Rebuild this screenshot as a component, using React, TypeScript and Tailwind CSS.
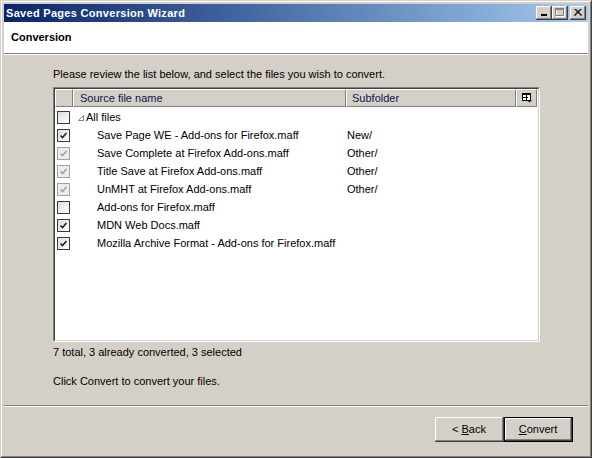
import React from "react";

const font = { fontFamily: '"Liberation Sans", Arial, sans-serif' };

function Check({ color }: { color: string }) {
  return (
    <svg width="11" height="11" viewBox="0 0 11 11" className="block">
      <path d="M2.5 5.5 L4.5 7.5 L8.5 3" fill="none" stroke={color} strokeWidth="1.6" />
    </svg>
  );
}

function CheckBox({ checked, disabled }: { checked?: boolean; disabled?: boolean }) {
  return (
    <div
      className={
        "w-[13px] h-[13px] border flex items-center justify-center " +
        (disabled
          ? "border-[#a3a3a3] bg-[#ececec]"
          : "border-[#3c3c3c] bg-gradient-to-br from-[#dcdcdc] to-[#ffffff]")
      }
    >
      {checked ? <Check color={disabled ? "#a0a0a0" : "#202020"} /> : null}
    </div>
  );
}

function TitleBtn({ children }: { children: React.ReactNode }) {
  return (
    <div className="w-[16px] h-[14px] border-r border-b border-[#404040]">
      <div className="w-full h-full border-t border-l border-white border-r border-b border-r-[#808080] border-b-[#808080] bg-[#d4d0c8] flex items-center justify-center">
        {children}
      </div>
    </div>
  );
}

function HeaderCell({ className, children }: { className: string; children?: React.ReactNode }) {
  return (
    <div
      className={
        "h-full border-t border-l border-white border-r border-b border-r-[#808080] border-b-[#808080] bg-[#d4d0c8] flex items-center text-[#12124a] " +
        className
      }
    >
      {children}
    </div>
  );
}

type Row = { name: string; sub?: string; checked?: boolean; disabled?: boolean };

const rows: Row[] = [
  { name: "Save Page WE - Add-ons for Firefox.maff", sub: "New/", checked: true },
  { name: "Save Complete at Firefox Add-ons.maff", sub: "Other/", checked: true, disabled: true },
  { name: "Title Save at Firefox Add-ons.maff", sub: "Other/", checked: true, disabled: true },
  { name: "UnMHT at Firefox Add-ons.maff", sub: "Other/", checked: true, disabled: true },
  { name: "Add-ons for Firefox.maff" },
  { name: "MDN Web Docs.maff", checked: true },
  { name: "Mozilla Archive Format - Add-ons for Firefox.maff", checked: true },
];

function Button({ children, isDefault }: { children: React.ReactNode; isDefault?: boolean }) {
  const inner = (
    <div className="w-full h-full border-r border-b border-[#404040]">
      <div className="w-full h-full border-t border-l border-white border-r border-b border-r-[#808080] border-b-[#808080] bg-[#d4d0c8] flex items-center justify-center text-black">
        {children}
      </div>
    </div>
  );
  return (
    <div className={"w-[69px] h-[25px] " + (isDefault ? "border border-black" : "")}>{inner}</div>
  );
}

export default function App() {
  return (
    <div className="w-[592px] h-[458px] text-[11px] leading-[13px] text-black" style={font}>
      <div className="w-full h-full border-t border-l border-[#d4d0c8] border-r border-b border-r-[#404040] border-b-[#404040]">
        <div className="w-full h-full border-t border-l border-white border-r border-b border-r-[#808080] border-b-[#808080] bg-[#d4d0c8] p-[2px] flex flex-col">
          {/* Title bar */}
          <div className="h-[18px] shrink-0 bg-gradient-to-r from-[#0a246a] to-[#a6caf0] flex items-center pl-[2px] pr-[2px]">
            <span className="text-white font-bold tracking-[0.3px]">Saved Pages Conversion Wizard</span>
            <div className="ml-auto flex items-center">
              <TitleBtn>
                <svg width="8" height="8" viewBox="0 0 8 8" className="block">
                  <rect x="1" y="5" width="6" height="2" fill="#000" />
                </svg>
              </TitleBtn>
              <TitleBtn>
                <svg width="10" height="9" viewBox="0 0 10 9" className="block">
                  <path d="M1.5 1.5 h8 v7 h-8 z" fill="none" stroke="#ffffff" strokeWidth="1" />
                  <path d="M0.5 0.5 h8 v7 h-8 z" fill="none" stroke="#808080" strokeWidth="1" />
                  <rect x="0" y="0" width="9" height="2" fill="#808080" />
                </svg>
              </TitleBtn>
              <div className="w-[2px]" />
              <TitleBtn>
                <svg width="8" height="7" viewBox="0 0 8 7" className="block">
                  <path d="M0.5 0 L7.5 7 M1.5 0 L8 6.5 M7.5 0 L0.5 7 M6.5 0 L0 6.5" stroke="#000" strokeWidth="1" />
                </svg>
              </TitleBtn>
            </div>
          </div>

          {/* Header */}
          <div className="h-[31px] shrink-0 bg-white flex items-center pl-[7px]">
            <span className="font-bold">Conversion</span>
          </div>
          <div className="shrink-0 border-t border-[#808080] border-b border-b-white" />

          {/* Body */}
          <div className="h-[350px] shrink-0 flex flex-col pl-[49px] pr-[48px]">
            <div className="mt-[13px]">Please review the list below, and select the files you wish to convert.</div>
            <div className="mt-[6px] h-[255px] border-t border-l border-[#808080] border-r border-b border-r-white border-b-white">
              <div className="w-full h-full border-t border-l border-[#404040] border-r border-b border-r-[#d4d0c8] border-b-[#d4d0c8] bg-white flex flex-col">
                <div className="h-[18px] flex shrink-0">
                  <HeaderCell className="w-[18px]" />
                  <HeaderCell className="w-[273px] pl-[6px]">Source file name</HeaderCell>
                  <HeaderCell className="w-[170px] pl-[5px]">Subfolder</HeaderCell>
                  <HeaderCell className="w-[21px] justify-center">
                    <svg width="10" height="10" viewBox="0 0 10 10" className="block">
                      <rect x="0.5" y="0.5" width="8" height="7" fill="#fff" stroke="#000" />
                      <rect x="0" y="0" width="9" height="2" fill="#000" />
                      <path d="M0.5 4.5 H6 M4.5 2 V7.5" stroke="#000" strokeWidth="1" />
                      <path d="M5 7 H10 L7.5 9.5 Z" fill="#000" />
                    </svg>
                  </HeaderCell>
                </div>
                <div className="flex flex-col pt-[1px]">
                  <div className="h-[18px] flex items-center">
                    <div className="w-[18px] pl-[2px]">
                      <CheckBox />
                    </div>
                    <div className="pl-[5px] flex items-center">
                      <svg width="6" height="6" viewBox="0 0 6 6" className="block mt-[2px]">
                        <path d="M5.5 0.5 V5.5 H0.5 Z" fill="none" stroke="#808080" strokeWidth="1" />
                      </svg>
                      <span className="ml-[2px]">All files</span>
                    </div>
                  </div>
                  {rows.map((r) => (
                    <div key={r.name} className="h-[18px] flex items-center">
                      <div className="w-[18px] pl-[2px]">
                        <CheckBox checked={r.checked} disabled={r.disabled} />
                      </div>
                      <div className="w-[273px] pl-[24px] whitespace-nowrap">{r.name}</div>
                      <div className="pl-[1px]">{r.sub ?? ""}</div>
                    </div>
                  ))}
                </div>
              </div>
            </div>
            <div className="mt-[4px]">7 total, 3 already converted, 3 selected</div>
            <div className="mt-[16px]">Click Convert to convert your files.</div>
          </div>

          <div className="shrink-0 border-t border-[#808080] border-b border-b-white" />

          {/* Footer */}
          <div className="flex-1 flex justify-end items-start pt-[10px] pr-[15px]">
            <Button>
              &lt; <span className="underline ml-[3px]">B</span>ack
            </Button>
            <Button isDefault>
              <span className="underline">C</span>onvert
            </Button>
          </div>
        </div>
      </div>
    </div>
  );
}
